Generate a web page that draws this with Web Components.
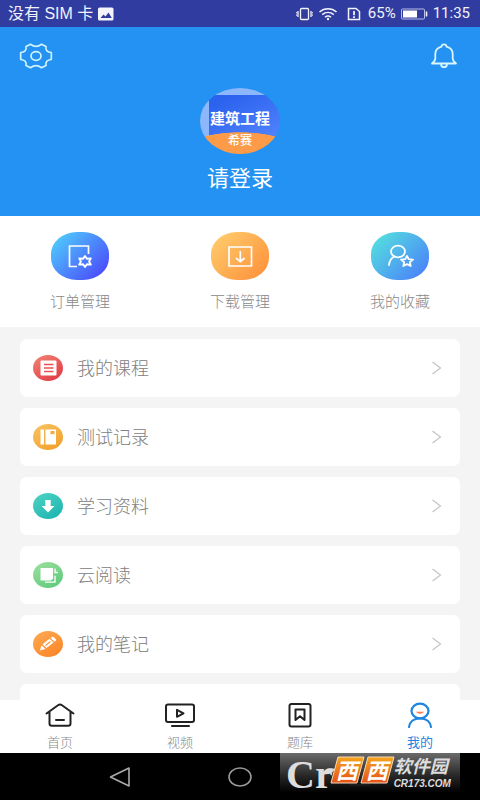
<!DOCTYPE html>
<html lang="zh-CN">
<head>
<meta charset="utf-8">
<meta name="viewport" content="width=device-width, initial-scale=1">
<title>我的</title>
<style>
  html, body { margin: 0; height: 100%; }
  body {
    font-family: "Noto Sans CJK SC", "Noto Sans", sans-serif;
    background: #f4f4f4;
    color: #888;
    overflow: hidden;
  }
</style>
</head>
<body>
<app-screen>
  <status-bar slot="status"></status-bar>
  <profile-header slot="header" name="请登录"></profile-header>

  <quick-link slot="quick" label="订单管理" from="#4fd8fb" to="#4a3cfb">
    <svg viewBox="0 0 58 48" fill="none" stroke="#fff" stroke-width="1.7">
      <path d="M37.500 22V14H18.500V34.500H26"/>
      <path d="M34 24l1.900 2.700 3.900-.3-1.700 3.100 1.700 3.100-3.900-.3-1.900 2.700-1.900-2.700-3.900.3 1.700-3.100-1.700-3.100 3.900.3z" stroke-width="1.900" stroke-linejoin="round"/>
    </svg>
  </quick-link>
  <quick-link slot="quick" label="下载管理" from="#ffd070" to="#fd8d37">
    <svg viewBox="0 0 58 48" fill="none" stroke="#fff" stroke-width="1.700">
      <path d="M18 15h22.500v19H18zM29.300 19v10.500M25 26l4.300 3.700 4.300-3.700"/>
    </svg>
  </quick-link>
  <quick-link slot="quick" label="我的收藏" from="#55e8dc" to="#4a78fc">
    <svg viewBox="0 0 58 48" fill="none" stroke="#fff" stroke-width="1.800" stroke-linecap="round" stroke-linejoin="round">
      <ellipse cx="27" cy="19.500" rx="7" ry="5.800"/>
      <path d="M18 33c.3-4.500 2.500-7 5.500-8.500"/>
      <path d="M36 24l1.700 3.200 4.300.4-3.200 2.600.9 3.800-3.700-1.900-3.700 1.900.9-3.800-3.200-2.600 4.300-.4z"/>
    </svg>
  </quick-link>

  <menu-item slot="menu" label="我的课程" from="#f28476" to="#e0353f">
    <svg viewBox="0 0 30 26"><rect x="7.500" y="5.500" width="16" height="15" rx="1" fill="#fff"/><path d="M11 9.500h9.500M11 13h9.500M11 16.500h9.500" stroke="#e9504f" stroke-width="1.400"/></svg>
  </menu-item>
  <menu-item slot="menu" label="测试记录" from="#f8c465" to="#f19d26">
    <svg viewBox="0 0 30 26"><path d="M7.500 5.500H11v15H7.500zM12.500 5.500H23v15H12.500z" fill="#fff"/><path d="M17.500 7h4v3.500l-2-.8-2 .8z" fill="#f3aa3d"/></svg>
  </menu-item>
  <menu-item slot="menu" label="学习资料" from="#4fd3c2" to="#19b2b1">
    <svg viewBox="0 0 30 26"><path d="M12.300 7h5.400v6h3.800L15 19.500 8.500 13h3.800z" fill="#fff"/></svg>
  </menu-item>
  <menu-item slot="menu" label="云阅读" from="#9fe0a0" to="#58c878">
    <svg viewBox="0 0 30 26"><path d="M7.500 6h12.500v10.500l-2 2H7.500z" fill="#fff"/><path d="M12 20.200h10v-6.500M22 6.500v4h3" fill="none" stroke="#fff" stroke-width="1.300"/></svg>
  </menu-item>
  <menu-item slot="menu" label="我的笔记" from="#ffab55" to="#f98222">
    <svg viewBox="0 0 30 26" fill="#fff"><path d="M9.500 13.200l7-5.400 4 3.800-7 5.500zM8.600 14.200l3.800 3.700-5.600 1.700zM17.600 7l1.300-1c.6-.4 1.200-.4 1.700 0l2.300 2.200c.4.500.4 1-.1 1.500l-1.300 1z"/><path d="M12.500 14.500l5-4" stroke="#fc963c" stroke-width="1.200"/></svg>
  </menu-item>
  <menu-item slot="menu" label="" blank></menu-item>

  <tab-item slot="tabs" label="首页">
    <svg viewBox="0 0 32 26" fill="none" stroke="#222" stroke-width="2" stroke-linejoin="round" stroke-linecap="round"><path d="M2.500 11.500L14 3.300c1.300-.9 2.700-.9 4 0L29.500 11.500M5.500 10v11.500c0 1.500.8 2.300 2.300 2.300h16.400c1.500 0 2.300-.8 2.300-2.300V10M12 18h8"/></svg>
  </tab-item>
  <tab-item slot="tabs" label="视频">
    <svg viewBox="0 0 32 26" fill="none" stroke="#222" stroke-width="2" stroke-linejoin="round" stroke-linecap="round"><rect x="2" y="2.500" width="28" height="17.500" rx="2"/><path d="M13 7.800v7l6.500-3.500zM8 24h17"/></svg>
  </tab-item>
  <tab-item slot="tabs" label="题库">
    <svg viewBox="0 0 32 26" fill="none" stroke="#222" stroke-width="2" stroke-linejoin="round"><rect x="5.500" y="2" width="21" height="22.500" rx="2"/><path d="M11.500 7.500h9V18L16 14.300 11.500 18z"/></svg>
  </tab-item>
  <tab-item slot="tabs" label="我的" active>
    <svg viewBox="0 0 32 26" fill="none" stroke="#1f86e0" stroke-width="2.200" stroke-linecap="round"><ellipse cx="16" cy="9" rx="8.500" ry="7.300"/><path d="M5 25c.5-5 4.500-8.700 11-8.700S26.500 20 27 25"/><path d="M13.500 10.300c1.200 1 3.800 1 5 0z" stroke="#fb7c55" stroke-width="1.300"/></svg>
  </tab-item>

  <system-nav slot="system"><site-mark></site-mark></system-nav>
</app-screen>

<script>
const define = (name, html, setup) => {
  const template = document.createElement('template');
  template.innerHTML = html;
  customElements.define(name, class extends HTMLElement {
    constructor() {
      super();
      this.attachShadow({ mode: 'open' }).append(template.content.cloneNode(true));
    }
    connectedCallback() {
      if (setup) setup(this, this.shadowRoot);
    }
  });
};

const applyLabel = (host, root) => {
  root.querySelector('.label').textContent = host.getAttribute('label');
  if (host.hasAttribute('from')) {
    host.style.setProperty('--from', host.getAttribute('from'));
    host.style.setProperty('--to', host.getAttribute('to'));
  }
};

define('app-screen', `
  <style>
    :host { display: flex; flex-direction: column; height: 100vh; }
    .quick { display: grid; grid-template-columns: repeat(3, 1fr); background: #fff; padding: 16px 0 15px; }
    main { flex: 1; min-height: 0; overflow: hidden; display: flex; flex-direction: column; gap: 11px; padding: 12px 20px 0; }
    .tabs { display: grid; grid-template-columns: repeat(4, 1fr); background: #fff; }
  </style>
  <slot name="status"></slot>
  <slot name="header"></slot>
  <nav class="quick"><slot name="quick"></slot></nav>
  <main><slot name="menu"></slot></main>
  <nav class="tabs"><slot name="tabs"></slot></nav>
  <slot name="system"></slot>`);

define('status-bar', `
  <style>
    :host { display: flex; align-items: center; justify-content: space-between; height: 27px; padding: 0 10px 0 8px; background: #303c9f; color: #f1f2fb; font-size: 15px; line-height: 27px; }
    div { display: flex; align-items: center; gap: 5px; }
    .carrier { font-family: "Liberation Sans", "Noto Sans CJK SC", sans-serif; font-size: 16px; }
    .figures { font-family: Roboto, sans-serif; }
    svg { display: block; }
  </style>
  <div>
    <span class="carrier">没有 SIM 卡</span>
    <svg width="16" height="14" viewBox="0 0 16 14"><rect y="0.500" width="15.500" height="13" rx="1.500" fill="#f4f5fc"/><path d="M2.500 11l3-3.500 2 2 3-4 3.300 5.500z" fill="#303c9f"/></svg>
  </div>
  <div>
    <svg width="17" height="14" viewBox="0 0 17 14" fill="none" stroke="#f1f2fb" stroke-width="1.300"><rect x="4.500" y="1.500" width="8" height="11" rx="1"/><path d="M2 4v6M15 4v6" /><path d="M.7 5v4M16.300 5v4" stroke-width="1" stroke-dasharray="1 .6"/></svg>
    <svg width="20" height="14" viewBox="0 0 20 14" fill="none" stroke="#f1f2fb" stroke-width="1.600"><path d="M1.500 5c5-4.300 12-4.300 17 0M4.200 7.700c3.500-3 8.100-3 11.600 0M7 10.200c1.800-1.400 4.200-1.400 6 0"/><circle cx="10" cy="12" r="1.200" fill="#f1f2fb" stroke="none"/></svg>
    <svg width="20" height="14" viewBox="0 0 20 14" fill="none" stroke="#f1f2fb" stroke-width="1.500"><path d="M5.500 1.500h7.500l3.500 3v8h-11z"/><path d="M11 4v4.200M11 9.200v1.800" stroke-width="1.800"/></svg>
    <span class="figures">65%</span>
    <svg width="27" height="12" viewBox="0 0 27 12"><rect x=".5" y="1" width="23" height="10" rx="1" fill="none" stroke="#b9bde4"/><path d="M2 2.500h14v7H2z" fill="#fff"/><path d="M25.500 3.500v5" stroke="#f1f2fb" stroke-width="1.600"/></svg>
    <span class="figures">11:35</span>
  </div>`);

define('profile-header', `
  <style>
    :host { display: grid; grid-template-columns: 40px 1fr 40px; align-items: start; height: 172px; padding: 12px 16px 5px; background: #2492f2; }
    button { display: grid; place-items: center; width: 40px; height: 34px; padding: 0; border: 0; background: none; }
    .profile { display: flex; flex-direction: column; align-items: center; padding-top: 49px; color: #fff; }
    .logo { display: flex; flex-direction: column; align-items: center; width: 80px; height: 66px; border-radius: 50%; overflow: hidden; color: #fff;
      background:
        radial-gradient(ellipse 70px 30px at 50% 74px, #fd9b48 98%, transparent 100%),
        linear-gradient(155deg, #2b62ee 10%, #5b8dff 90%) 9px 7px / 100% 100% no-repeat,
        #8db7fb; }
    .title { margin-top: 20px; font-size: 15px; line-height: 20px; font-weight: 700; white-space: nowrap; }
    .maker { margin-top: 4px; font-size: 12px; line-height: 16px; font-weight: 500; }
    .name { margin-top: 6px; font-size: 22px; line-height: 32px; color: #fff; text-decoration: none; }
  </style>
  <button aria-label="设置">
    <svg width="34" height="28" viewBox="0 0 34 28" fill="none" stroke="#cff3ff" stroke-width="1.700" stroke-linejoin="round"><path d="M11.500 2.300Q17 6.500 22.500 2.300L27 4.500Q26 10 32.300 10.500V17.500Q26 18 27 23.500L22.500 25.700Q17 21.500 11.500 25.700L7 23.500Q8 18 1.700 17.500V10.500Q8 10 7 4.500Z"/><ellipse cx="17" cy="14" rx="5" ry="4.300"/></svg>
  </button>
  <div class="profile">
    <div class="logo"><span class="title">建筑工程</span><span class="maker">希赛</span></div>
    <a class="name" href="#login"></a>
  </div>
  <button aria-label="消息">
    <svg width="28" height="26" viewBox="0 0 28 26" fill="none" stroke="#d9f6ff" stroke-width="1.800" stroke-linejoin="round"><path d="M11.500 3.700c.2-3 4.800-3 5 0 3.800 1 6.200 3.800 6.200 7.300v4.500c0 2 1 3 3.300 5H2c2.300-2 3.300-3 3.300-5V11c0-3.500 2.400-6.300 6.200-7.300zM11 21.500c.5 3.500 5.500 3.500 6 0"/></svg>
  </button>`, (host, root) => { root.querySelector('.name').textContent = host.getAttribute('name'); });

define('quick-link', `
  <style>
    :host { display: block; }
    a { display: flex; flex-direction: column; align-items: center; gap: 10px; color: #888; text-decoration: none; }
    .tile { width: 58px; height: 48px; border-radius: 26px / 22px; background: linear-gradient(135deg, var(--from), var(--to)); }
    ::slotted(svg) { display: block; width: 100%; height: 100%; }
    .label { font-size: 15px; line-height: 22px; font-weight: 300; }
  </style>
  <a href="#"><span class="tile"><slot></slot></span><span class="label"></span></a>`, applyLabel);

define('menu-item', `
  <style>
    :host { display: block; flex: none; }
    a { display: flex; align-items: center; height: 58px; box-sizing: border-box; padding: 0 18px 0 13px; border-radius: 7px; background: #fff; color: #808080; text-decoration: none; }
    .badge { width: 30px; height: 26px; border-radius: 50%; background: linear-gradient(150deg, var(--from), var(--to)); }
    ::slotted(svg) { display: block; width: 100%; height: 100%; }
    .label { flex: 1; margin-left: 14px; font-size: 18px; line-height: 26px; font-weight: 300; padding-bottom: 2px; }
    :host([blank]) a > * { visibility: hidden; }
  </style>
  <a href="#"><span class="badge"><slot></slot></span><span class="label"></span>
    <svg width="11" height="14" viewBox="0 0 11 14" fill="none" stroke="#c4c4c4" stroke-width="1.200"><path d="M1.500 1l8 6-8 6"/></svg></a>`, applyLabel);

define('tab-item', `
  <style>
    :host { display: block; color: #888; }
    :host([active]) { color: #1f86e0; }
    a { display: flex; flex-direction: column; align-items: center; gap: 4px; padding: 2px 0 1px; color: inherit; text-decoration: none; }
    ::slotted(svg) { display: block; width: 32px; height: 26px; }
    .label { font-size: 13px; line-height: 20px; font-weight: 300; }
    :host([active]) .label { font-weight: 400; }
  </style>
  <a href="#"><slot></slot><span class="label"></span></a>`, applyLabel);

define('system-nav', `
  <style>
    :host { display: grid; grid-template-columns: repeat(3, 1fr); position: relative; height: 47px; padding: 0 12.5%; background: #000; }
    button { display: grid; place-items: center; padding: 0; border: 0; background: none; }
    ::slotted(site-mark) { position: absolute; right: 20px; top: 0; }
  </style>
  <button aria-label="返回"><svg width="22" height="22" viewBox="0 0 22 22" fill="none" stroke="#aaa" stroke-width="1.600" stroke-linejoin="round"><path d="M20 2v18L1.500 11z"/></svg></button>
  <button aria-label="主屏幕"><svg width="24" height="22" viewBox="0 0 24 22" fill="none" stroke="#999" stroke-width="1.600"><ellipse cx="12" cy="11" rx="11" ry="9"/></svg></button>
  <button aria-label="最近任务"><svg width="20" height="18" viewBox="0 0 20 18" fill="none" stroke="#999" stroke-width="1.500"><rect x="1" y="1" width="18" height="16"/></svg></button>
  <slot></slot>`);

define('site-mark', `
  <style>
    :host { display: flex; align-items: flex-start; box-sizing: border-box; width: 180px; height: 47px; padding-left: 6px; background: linear-gradient(rgba(112,112,112,.95), rgba(40,40,40,.94) 50%, rgba(0,0,0,.9) 85%); color: #ddd; }
    .initials { position: relative; font: 700 40px/44px "Liberation Serif", serif; }
    .leaf { position: absolute; right: -2px; top: 14px; }
    .plates { display: flex; gap: 4px; margin: 4px 4px 0 1px; }
    .plate { position: relative; width: 26px; height: 26px; text-align: center; color: #fff; font-size: 22px; line-height: 25px; font-weight: 700; font-style: italic; z-index: 0; }
    .plate svg { position: absolute; inset: 0; z-index: -1; overflow: visible; }
    .words { display: flex; flex-direction: column; gap: 2px; font-style: italic; font-weight: 700; white-space: nowrap; }
    .cn { font-size: 18px; line-height: 24px; }
    .domain { font: italic 700 10px/10px "Liberation Sans", sans-serif; }
  </style>
  <span class="initials">Cr<svg class="leaf" width="12" height="8" viewBox="0 0 14 9"><path d="M0 8C1 2 6 0 14 2 11 8 6 9 0 8z" fill="#ddd"/></svg></span>
  <span class="plates">
    <span class="plate"><svg width="26" height="26" viewBox="0 0 26 26"><defs><linearGradient id="p" x2="0" y2="1"><stop stop-color="#f5a51c"/><stop offset="1" stop-color="#e5511b"/></linearGradient></defs><path d="M4 0h26l-7 26H-3z" fill="url(#p)" stroke="#f6d9b8"/></svg>西</span>
    <span class="plate"><svg width="26" height="26" viewBox="0 0 26 26"><path d="M4 0h26l-7 26H-3z" fill="url(#p)" stroke="#f6d9b8"/></svg>西</span>
  </span>
  <span class="words"><span class="cn">软件园</span><span class="domain">CR173.COM</span></span>`);
</script>
</body>
</html>
